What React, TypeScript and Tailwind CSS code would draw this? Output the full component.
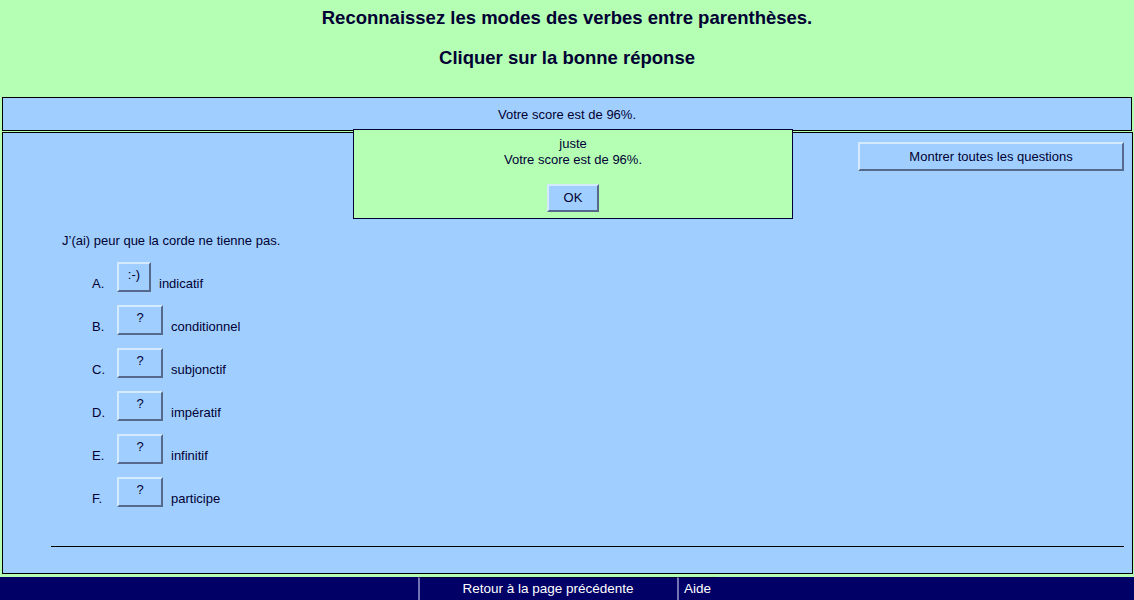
import React from 'react'

const options = [
  { letter: 'A.', mark: ':-)', label: 'indicatif', w: 'w-[34px]' },
  { letter: 'B.', mark: '?', label: 'conditionnel', w: 'w-[46px]' },
  { letter: 'C.', mark: '?', label: 'subjonctif', w: 'w-[46px]' },
  { letter: 'D.', mark: '?', label: 'impératif', w: 'w-[46px]' },
  { letter: 'E.', mark: '?', label: 'infinitif', w: 'w-[46px]' },
  { letter: 'F.', mark: '?', label: 'participe', w: 'w-[46px]' },
]

const btn =
  'bg-[#a0cfff] border-2 border-t-[#d4eaff] border-l-[#d4eaff] border-b-[#56698a] border-r-[#56698a] text-[#000033] text-[13px]'

export default function App() {
  return (
    <div
      className="relative h-[600px] w-[1134px] overflow-hidden bg-[#b5ffb5] text-[#000033]"
      style={{ fontFamily: '"Liberation Sans", Arial, sans-serif' }}
    >
      {/* Title */}
      <div className="h-[97px] pt-[7px] text-center text-[18.5px] font-bold leading-[21px]">
        <div>Reconnaissez les modes des verbes entre parenthèses.</div>
        <div className="mt-[19px]">Cliquer sur la bonne réponse</div>
      </div>

      {/* Score bar */}
      <div className="ml-[2px] mr-[2px] flex h-[34px] items-center justify-center border border-black bg-[#a0cfff] pt-[1px] text-[13px]">
        Votre score est de 96%.
      </div>

      {/* Main panel */}
      <div className="ml-[2px] mr-[1px] mt-[1px] h-[442px] border border-black bg-[#a0cfff] text-[13px]">
        <div className="flex justify-end pr-[8px] pt-[9px]">
          <button className={`${btn} h-[29px] w-[266px] leading-[16px]`}>Montrer toutes les questions</button>
        </div>

        <div className="mt-[62px] pl-[59px] leading-[16px]">J’(ai) peur que la corde ne tienne pas.</div>

        <div className="mt-[13px] flex flex-col gap-[13px] pl-[89px]">
          {options.map((o) => (
            <div key={o.letter} className="flex items-start leading-[16px]">
              <span className="mt-[14px] w-[25px]">{o.letter}</span>
              <button className={`${btn} ${o.w} flex h-[30px] shrink-0 justify-center pt-[3px]`}>{o.mark}</button>
              <span className="ml-[8px] mt-[14px]">{o.label}</span>
            </div>
          ))}
        </div>

        <div className="ml-[48px] mr-[8px] mt-[39px] h-px bg-black" />
      </div>

      {/* Footer */}
      <div className="mt-[3px] flex h-[23px] justify-center bg-[#000066] text-[13.5px] text-white">
        <div className="flex h-full w-[259px] items-center justify-center border-l-2 border-t border-l-[#7373b3] border-t-[#00003a]">
          Retour à la page précédente
        </div>
        <div className="flex h-full w-[40px] items-center justify-center border-l-2 border-t border-l-[#7373b3] border-t-[#00003a]">
          Aide
        </div>
      </div>

      {/* Feedback popup */}
      <div className="absolute left-[353px] top-[129px] flex h-[90px] w-[440px] flex-col items-center border border-[#000033] bg-[#b5ffb5] pt-[6px] text-[13px] leading-[16px]">
        <div>juste</div>
        <div>Votre score est de 96%.</div>
        <button className={`${btn} mt-[16px] h-[28px] w-[52px] leading-[16px]`}>OK</button>
      </div>
    </div>
  )
}
